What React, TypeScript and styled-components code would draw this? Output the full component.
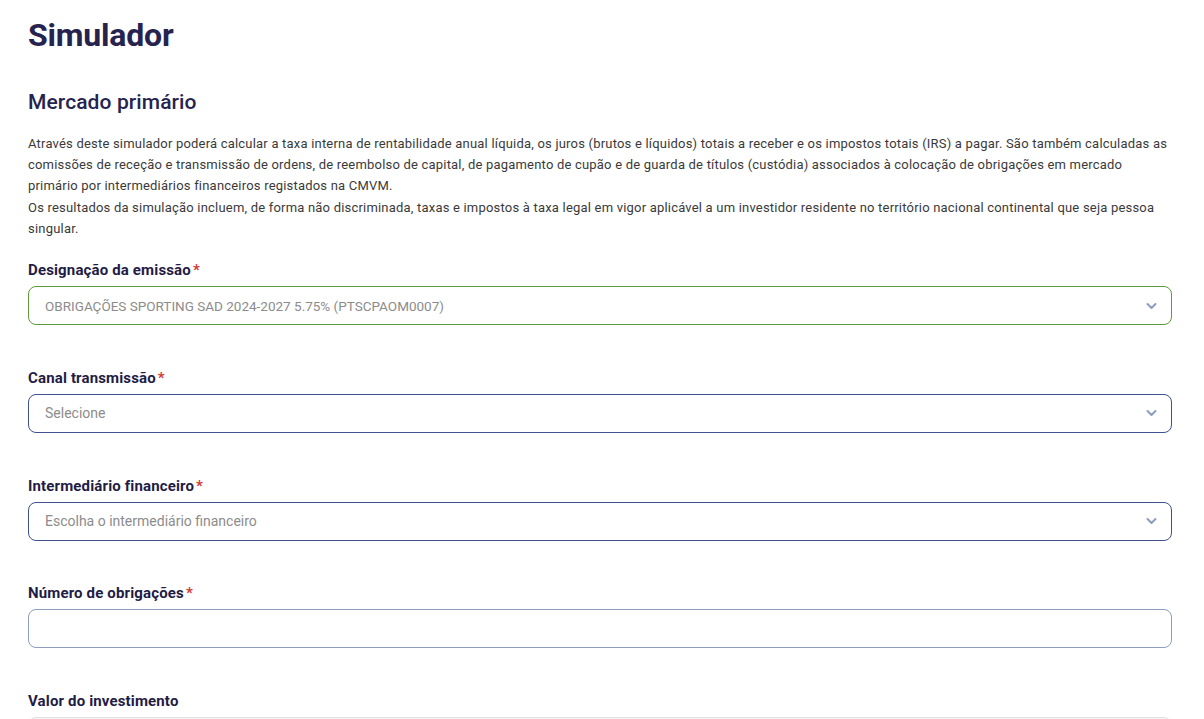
import React from 'react';
import styled, { createGlobalStyle } from 'styled-components';

const GlobalStyle = createGlobalStyle`
  html, body {
    margin: 0;
    padding: 0;
    background: #ffffff;
  }
  body {
    font-family: Roboto, "Noto Sans", Arial, sans-serif;
  }
  * {
    box-sizing: border-box;
  }
`;

const Page = styled.main`
  padding: 14px 32px 0 28px;
  height: 719px;
  overflow: hidden;
`;

const Title = styled.h1`
  margin: 0;
  font-size: 32px;
  line-height: 42px;
  font-weight: 700;
  color: #26234f;
  letter-spacing: -0.2px;
`;

const Subtitle = styled.h2`
  margin: 32px 0 0;
  font-size: 21px;
  line-height: 28px;
  font-weight: 500;
  color: #26234f;
  letter-spacing: 0.1px;
`;

const Intro = styled.div`
  margin-top: 17px;
  font-size: 13px;
  line-height: 21.2px;
  color: #3a3a3a;
  letter-spacing: 0.2px;

  p {
    margin: 0;
  }
`;

const Form = styled.form`
  margin-top: 22px;
  display: flex;
  flex-direction: column;
  gap: 43.75px;
`;

const Field = styled.div`
  display: flex;
  flex-direction: column;
  gap: 7px;
`;

const Label = styled.label`
  font-size: 15px;
  line-height: 18px;
  font-weight: 700;
  color: #1f1c45;
  letter-spacing: 0.15px;
`;

const Required = styled.span`
  color: #d23b35;
  margin-left: 2px;
`;

type Tone = 'valid' | 'default' | 'muted' | 'disabled';

const borderFor: Record<Tone, string> = {
  valid: '#5c9a3c',
  default: '#3f5191',
  muted: '#8f9dc0',
  disabled: '#e2e2e2',
};

const Control = styled.div<{ $tone: Tone }>`
  position: relative;
  height: 39px;
  border: 1px solid ${(p) => borderFor[p.$tone]};
  border-radius: 8px;
  background: ${(p) => (p.$tone === 'disabled' ? '#f4f4f4' : '#ffffff')};
  display: flex;
  align-items: center;
  padding: 0 40px 0 16px;
`;

const Value = styled.span<{ $caps?: boolean }>`
  font-size: ${(p) => (p.$caps ? '13.5px' : '14px')};
  color: #8c8c8c;
`;

const Chevron = styled.svg`
  position: absolute;
  right: 14px;
  top: 50%;
  margin-top: -5px;
  width: 11px;
  height: 10px;
`;

const ChevronDown = () => (
  <Chevron viewBox="0 0 11 10" fill="none">
    <path d="M1.5 3 5.5 7l4-4" stroke="#8b9cc1" strokeWidth="2" strokeLinecap="round" strokeLinejoin="round" />
  </Chevron>
);

interface SelectFieldProps {
  label: string;
  value: string;
  tone: Tone;
  caps?: boolean;
}

const SelectField: React.FC<SelectFieldProps> = ({ label, value, tone, caps }) => (
  <Field>
    <Label>
      {label}
      <Required>*</Required>
    </Label>
    <Control $tone={tone}>
      <Value $caps={caps}>{value}</Value>
      <ChevronDown />
    </Control>
  </Field>
);

const App: React.FC = () => {
  return (
    <>
      <GlobalStyle />
      <Page>
        <Title>Simulador</Title>
        <Subtitle>Mercado primário</Subtitle>

        <Intro>
          <p>
            Através deste simulador poderá calcular a taxa interna de rentabilidade anual líquida, os juros (brutos e líquidos) totais a receber e os impostos totais (IRS) a pagar. São também calculadas as comissões de receção e transmissão de ordens, de reembolso de capital, de pagamento de cupão e de guarda de títulos (custódia) associados à colocação de obrigações em mercado primário por intermediários financeiros registados na CMVM.
          </p>
          <p>
            Os resultados da simulação incluem, de forma não discriminada, taxas e impostos à taxa legal em vigor aplicável a um investidor residente no território nacional continental que seja pessoa singular.
          </p>
        </Intro>

        <Form>
          <SelectField
            label="Designação da emissão"
            value="OBRIGAÇÕES SPORTING SAD 2024-2027 5.75% (PTSCPAOM0007)"
            tone="valid"
            caps
          />
          <SelectField label="Canal transmissão" value="Selecione" tone="default" />
          <SelectField
            label="Intermediário financeiro"
            value="Escolha o intermediário financeiro"
            tone="default"
          />
          <Field>
            <Label>
              Número de obrigações<Required>*</Required>
            </Label>
            <Control $tone="muted" />
          </Field>
          <Field>
            <Label>Valor do investimento</Label>
            <Control $tone="disabled" />
          </Field>
        </Form>
      </Page>
    </>
  );
};

export default App;
